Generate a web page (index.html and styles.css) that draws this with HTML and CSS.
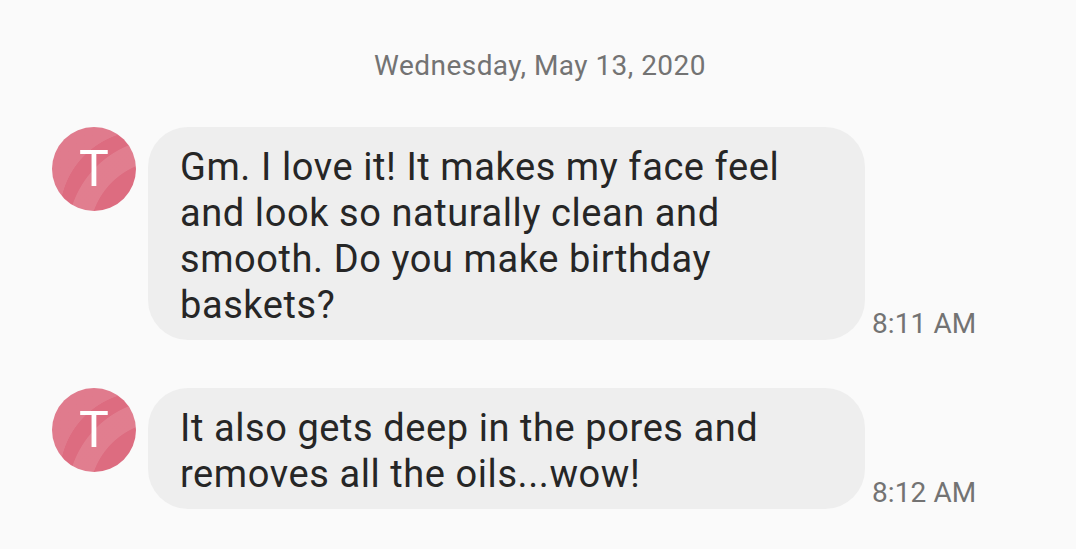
FILE: index.html
```html
<!DOCTYPE html>
<html>
<head>
<meta charset="utf-8">
<link rel="stylesheet" href="styles.css">
</head>
<body>
<div class="thread">
  <div class="date">Wednesday, May 13, 2020</div>
  <div class="msg">
    <div class="avatar">T</div>
    <div class="bubble">Gm. I love it! It makes my face feel and look so naturally clean and smooth. Do you make birthday baskets?</div>
    <div class="time">8:11 AM</div>
  </div>
  <div class="msg">
    <div class="avatar">T</div>
    <div class="bubble">It also gets deep in the pores and removes all the oils...wow!</div>
    <div class="time">8:12 AM</div>
  </div>
</div>
</body>
</html>
```
FILE: styles.css
```css
html, body {
  margin: 0;
  padding: 0;
  background: #fafafa;
}
body {
  font-family: Roboto, "Noto Sans", sans-serif;
  width: 1076px;
  height: 549px;
  overflow: hidden;
}
.thread {
  display: flex;
  flex-direction: column;
  padding: 48px 0 0 52px;
  gap: 48px;
}
.date {
  margin-left: -48px;
  text-align: center;
  font-size: 28px;
  letter-spacing: 0.45px;
  line-height: 36px;
  color: #737373;
  margin-bottom: -5px;
}
.msg {
  display: flex;
  align-items: flex-start;
}
.avatar {
  width: 84px;
  height: 84px;
  border-radius: 50%;
  flex: none;
  margin-right: 12px;
  background:
    radial-gradient(circle at 135% 130%, rgba(255,255,255,0) 48%, rgba(255,255,255,0.12) 48.5%, rgba(255,255,255,0.12) 62%, rgba(255,255,255,0) 62.5%),
    radial-gradient(circle at 110% 105%, rgba(255,255,255,0) 66%, rgba(255,255,255,0.1) 66.5%),
    #dd6c80;
  color: #fff;
  font-size: 50px;
  line-height: 84px;
  text-align: center;
}
.bubble {
  width: 717px;
  box-sizing: border-box;
  padding: 17px 40px 12px 32px;
  background: #eeeeee;
  border-radius: 40px;
  color: #262626;
  font-size: 38px;
  letter-spacing: 0.58px;
  line-height: 46px;
  flex: none;
}
.time {
  align-self: flex-end;
  margin-left: 7px;
  font-size: 28px;
  letter-spacing: 0.1px;
  line-height: 32px;
  color: #737373;
}
```
